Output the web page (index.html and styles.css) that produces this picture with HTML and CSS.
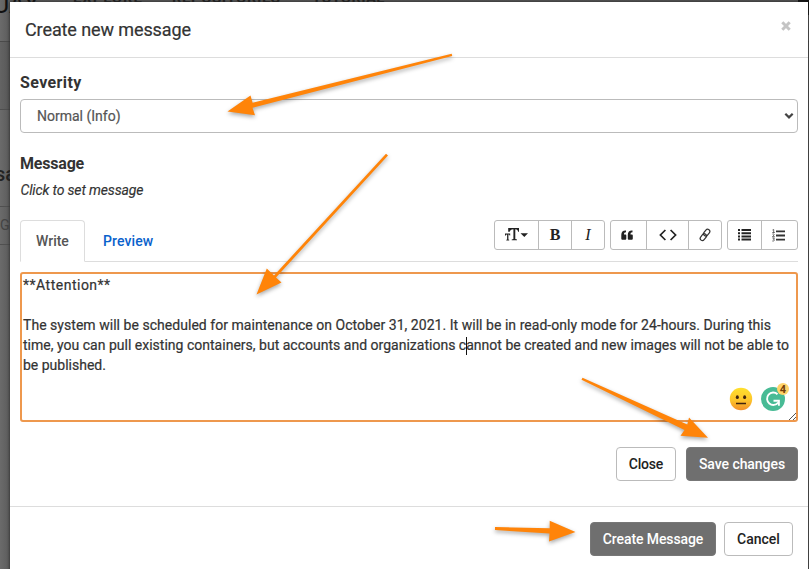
FILE: index.html
```html
<!DOCTYPE html>
<html lang="en">
<head>
<meta charset="utf-8">
<title>Create new message</title>
<link rel="stylesheet" href="styles.css">
</head>
<body>
<div class="page" aria-hidden="true">
  <div class="topbar"><span class="brand">UAY</span><span class="nav n1">EXPLORE</span><span class="nav n2">REPOSITORIES</span><span class="nav n3">TUTORIAL</span><i class="edge"></i></div>
  <div class="band"></div>
  <div class="heading">sa</div>
  <div class="tablehead">GE</div>
</div>
<div class="modal" role="dialog">
  <header class="modal-header">
    <h4 class="title">Create new message</h4>
    <button class="x" aria-label="Close dialog"><svg width="10" height="10" viewBox="0 0 10 10"><path d="M1.300 1.300 8.700 8.700M8.700 1.300 1.300 8.700" stroke="#c4c4c4" stroke-width="3"/></svg></button>
  </header>
  <main class="modal-body">
    <label class="label sev">Severity</label>
    <div class="select"><span>Normal (Info)</span><svg width="10" height="8" viewBox="0 0 10 8"><path d="M1.300 1.800 5 5.400 8.700 1.800" fill="none" stroke="#444" stroke-width="2.200"/></svg></div>
    <label class="label msg">Message</label>
    <div class="hint">Click to set message</div>
    <div class="editor-head">
      <nav class="tabs"><a class="tab active">Write</a><a class="tab link">Preview</a></nav>
      <div class="tools">
        <div class="group">
          <button class="w43"><svg width="24" height="16" viewBox="0 0 24 16"><path d="M3.200 1H14v3.800h-.9C12.800 3 12.300 2.300 10.300 2.200V12l1.700.5v.8H6.700v-.8l1.700-.5V2.200C6 2.300 5.200 3 4.700 4.800H3.200zM0 6.400h5.200v2.200h-.6c-.2-.8-.4-1-1.200-1V12.600l.8.200v.6H1.300v-.6l.8-.2V7.600c-.8 0-1 .2-1.200 1H0zM15.500 6.200h7.500l-3.700 3.800z" fill="#222"/></svg></button>
          <button class="w33 glyph bold">B</button>
          <button class="w33 glyph italic">I</button>
        </div>
        <div class="group">
          <button class="w35"><svg width="12" height="11" viewBox="0 0 12 11"><path d="M5 .5v1.800C3.500 2.300 3 3.100 3 4.400h1.200c.7 0 1.100.4 1.100 1.100v3c0 .8-.5 1.300-1.300 1.300H1.600C.8 9.800.3 9.300.3 8.500V4.700C.3 2 2 .5 4.300.5zM11.500.5v1.800c-1.500 0-2 .8-2 2.100h1.200c.7 0 1.100.4 1.100 1.100v3c0 .8-.5 1.300-1.300 1.300H8.100c-.8 0-1.300-.5-1.300-1.300V4.700C6.800 2 8.500.5 10.800.5z" fill="#222"/></svg></button>
          <button class="w42"><svg width="18" height="12" viewBox="0 0 18 12"><path d="M6.400 1 1.400 6l5 5M11.600 1l5 5-5 5" fill="none" stroke="#222" stroke-width="1.700"/></svg></button>
          <button class="w33"><svg width="12" height="14" viewBox="0 0 12 14"><g fill="none" stroke="#333" stroke-width="1.200"><rect x="-2.200" y="-3.700" width="4.400" height="7.400" rx="2.200" transform="translate(7.700 4.600) rotate(38)"/><rect x="-2.200" y="-3.700" width="4.400" height="7.400" rx="2.200" transform="translate(4.300 9.200) rotate(38)"/></g></svg></button>
        </div>
        <div class="group">
          <button class="w33"><svg width="13" height="12" viewBox="0 0 13 12"><path d="M0 0h2v2H0zM0 3.200h2v2H0zM0 6.400h2v2H0zM0 9.600h2v2H0zM3.500 0H13v2H3.500zM3.500 3.200H13v2H3.500zM3.500 6.400H13v2H3.500zM3.500 9.600H13v2H3.500z" fill="#222"/></svg></button>
          <button class="w36"><svg class="ol" width="13" height="13" viewBox="0 0 13 13"><path d="M4 1.400h9v1.800H4zM4 5.600h9v1.800H4zM4 9.700h9v1.800H4z" fill="#333"/><path d="M.5 1 1.700.5v3M.3 3.500h2.500M.4 5.100c1-.7 2 0 1.600.9L.5 7.700h2.300M.4 9h2l-1 1.300c1.600-.1 1.500 2.100-1.100 1.700" fill="none" stroke="#444" stroke-width=".8"/></svg></button>
        </div>
      </div>
    </div>
    <div class="textarea">
      <p class="l0">**Attention**</p><p>&nbsp;</p>
      <p class="l1">The system will be scheduled for maintenance on October 31, 2021. It will be in read-only mode for 24-hours. During this</p>
      <p class="l2">time, you can pull existing containers, but accounts and organizations cannot be created and new images will not be able to</p>
      <p>be published.</p>
      <i class="caret"></i>
      <svg class="badges" width="70" height="42" viewBox="728 380 70 42">
        <defs><linearGradient id="face" x2="0" y2="1"><stop stop-color="#ffe02d"/><stop offset=".55" stop-color="#fdc52b"/><stop offset="1" stop-color="#f3902a"/></linearGradient></defs>
        <circle cx="741" cy="399" r="11.200" fill="url(#face)"/>
        <ellipse cx="737.300" cy="397.200" rx="1.500" ry="1.900" fill="#40240e"/><ellipse cx="744.600" cy="397.200" rx="1.500" ry="1.900" fill="#40240e"/>
        <path d="M736 403.500h10" stroke="#40240e" stroke-width="1.500"/>
        <circle cx="773" cy="399" r="12" fill="#48bb95"/>
        <path d="M777.500 394.200a6.200 6.200 0 1 0 .7 8.300M773.500 400.700h5.400v5" fill="none" stroke="#fff" stroke-width="1.900"/>
        <circle cx="783" cy="389" r="6" fill="#ffd36a"/>
        <text x="783" y="393" text-anchor="middle" class="count">4</text>
        <path d="M789 420l7-7M793 420l3-3" stroke="#555" stroke-width="1"/>
      </svg>
    </div>
    <div class="actions"><button class="btn b1">Close</button><button class="btn dark b2">Save changes</button></div>
  </main>
  <footer class="modal-footer"><button class="btn dark b3">Create Message</button><button class="btn b4">Cancel</button></footer>
</div>
<svg class="arrows" width="809" height="569" viewBox="0 0 809 569">
  <g fill="#ff8409">
    <path d="M451.700 53.700 252.600 102.800 250.500 95.500 227.500 111.500 255 115.300 252.500 107.800 452.200 56z"/>
    <path d="M386 153.700 274 275.500 266.800 268.500 256.500 294.500 281.500 282.500 276 277.500 388 155.500z"/>
    <path d="M582.500 377.700 687.300 424.500 689 417.600 708 437.800 680.500 435.800 684.500 430 581.500 379.700z"/>
    <path d="M495 527 549.700 528.300V520.700L575.500 532 549 541.500 549.500 533.500 495 530z"/>
  </g>
</svg>
</body>
</html>
```
FILE: styles.css
```css
* { box-sizing: border-box; }
body { margin: 0; width: 809px; height: 569px; overflow: hidden; position: relative; background: #646464; color: #333; font: 500 14px/20px Roboto, sans-serif; }
button { font: inherit; padding: 0; margin: 0; background: #fff; color: #222; }
h4, p { margin: 0; }
.page { position: absolute; inset: 0; overflow: hidden; background: linear-gradient(90deg, #6b6b6b 0, #5b5b5b 10px, #555 100%); color: #222; }
.topbar { height: 42px; border-bottom: 1px solid #4a4a4a; position: relative; }
.topbar span { position: absolute; white-space: nowrap; }
.brand { left: -7px; top: -8px; font-size: 25px; line-height: 25px; color: #111; font-weight: 400; }
.nav { top: -9px; font-size: 15px; line-height: 15px; letter-spacing: .9px; font-weight: 700; }
.n1 { left: 73px; }
.n2 { left: 172px; letter-spacing: .5px; }
.n3 { left: 312px; letter-spacing: .2px; }
.edge { position: absolute; right: 0; top: 0; width: 11px; height: 15px; background: #111; }
.band { height: 68px; border-bottom: 1px solid #4e4e4e; background: rgba(0,0,0,.06); }
.heading { margin: 51px 0 0 -5px; height: 46px; border-bottom: 1px solid #505050; font-size: 20px; line-height: 26px; }
.tablehead { height: 38px; line-height: 36px; color: #444; font-weight: 400; border-bottom: 1px solid #505050; }
.modal { position: relative; margin: 2px 1px 0 10px; height: 580px; background: #fff; box-shadow: 0 0 3px #222; }
.modal-header { height: 56px; border-bottom: 1px solid #ddd; display: flex; justify-content: space-between; padding: 18px 17px 0 15px; }
.title { font-size: 18px; font-weight: 400; line-height: 20px; letter-spacing: -.1px; color: #333; -webkit-text-stroke: .2px; }
.x { border: 0; height: 10px; margin-top: 1px; line-height: 0; }
.modal-body { height: 448px; padding: 15px 10px 0; }
.label { display: block; font-size: 16px; font-weight: 700; line-height: 20px; }
.sev { letter-spacing: .38px; }
.select { margin-top: 6px; height: 34px; border: 1px solid #bbb; border-radius: 4px; padding: 0 3px 0 16px; display: flex; justify-content: space-between; align-items: center; color: #555; font-weight: 400; -webkit-text-stroke: .2px; }
.msg { margin-top: 21px; letter-spacing: -.2px; }
.hint { margin-top: 6px; font-style: italic; font-weight: 400; letter-spacing: -.15px; padding-left: .5px; -webkit-text-stroke: .15px; }
.editor-head { margin-top: 20px; height: 42px; border-bottom: 1px solid #ddd; display: flex; justify-content: space-between; }
.tabs { display: flex; }
.tab { height: 42px; padding: 10px 15px; border: 1px solid transparent; }
.active { width: 65px; background: #fff; border-color: #ddd #ddd #fff; border-radius: 4px 4px 0 0; color: #555; }
.link { margin-left: 2px; color: #0a62cc; letter-spacing: .1px; }
.tools { display: flex; gap: 5px; }
.group { display: flex; height: 30px; border: 1px solid #bbb; border-radius: 3px; }
.group button { border: 0; display: flex; align-items: center; justify-content: center; background: none; }
.group button + button { border-left: 1px solid #bbb; }
.w43 { width: 43px; }
.w33 { width: 33px; }
.w35 { width: 35px; }
.w42 { width: 42px; }
.w36 { width: 36px; }
.group .w35, .group .w36 { padding-right: 3px; }
.glyph { font-family: "Liberation Serif", serif; font-size: 16px; }
.group .bold { font-weight: 700; }
.group .italic { font-style: italic; }
.textarea { position: relative; margin-top: 10px; height: 150px; border: 2px solid #ee984d; border-radius: 3px; padding: 1px; font-weight: 400; white-space: nowrap; -webkit-text-stroke: .2px; }
.l0 { letter-spacing: .5px; }
.l1 { letter-spacing: .036px; }
.l2 { letter-spacing: .01px; }
.caret { position: absolute; left: 444px; top: 63px; width: 1px; height: 18px; background: #111; }
.badges { position: absolute; right: -2px; bottom: -2px; -webkit-text-stroke: 0; }
.count { font: 700 11px Roboto, sans-serif; fill: #713d0b; }
.actions { display: flex; justify-content: flex-end; gap: 10px; margin-top: 25px; }
.btn { height: 34px; border: 1px solid #bbb; border-radius: 4px; }
.dark { background: #6f6f6f; border-color: #777; color: #fff; }
.b1 { width: 60px; letter-spacing: -.2px; }
.b2 { width: 112px; letter-spacing: -.05px; }
.b3 { width: 126px; letter-spacing: -.1px; }
.b4 { width: 69px; }
.modal-footer { border-top: 1px solid #ddd; padding: 15px 15px 0; display: flex; justify-content: flex-end; gap: 8px; }
.arrows { position: absolute; left: 0; top: 0; filter: drop-shadow(0 2px 2px rgba(0,0,0,.35)); }
```
